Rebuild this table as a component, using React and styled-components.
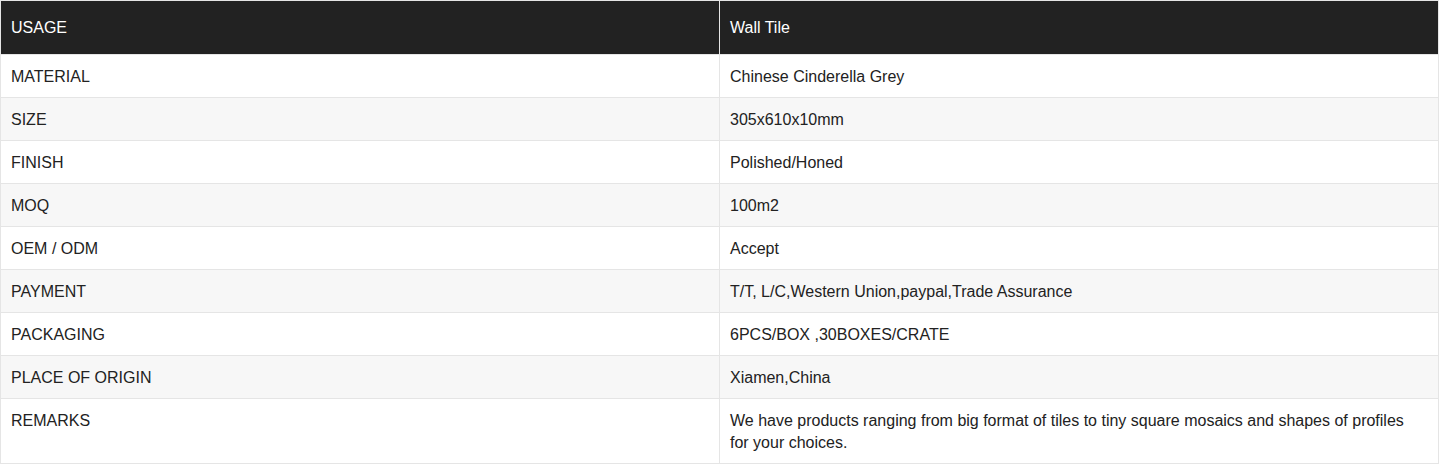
import React from 'react'
import styled, { createGlobalStyle } from 'styled-components';

const GlobalStyle = createGlobalStyle`
  body {
    margin: 0;
    background: #fff;
    font-family: "Liberation Sans", Arial, sans-serif;
  }
`;

const Table = styled.table`
  width: 1439px;
  border-collapse: collapse;
  table-layout: fixed;
  font-size: 16px;
  line-height: 22px;
  color: #222;
`;

const HeadCell = styled.th`
  background: #222;
  color: #fff;
  font-weight: normal;
  text-align: left;
  padding: 16px 10px 15px;
  border: 1px solid #e5e5e5;
`;

const Row = styled.tr`
  background: ${props => props.$striped ? '#f7f7f7' : '#fff'};
`;

const Cell = styled.td`
  padding: 11px 20px 9px 10px;
  border: 1px solid #e5e5e5;
  vertical-align: top;
`;

const specs = [
  ['MATERIAL', 'Chinese Cinderella Grey'],
  ['SIZE', '305x610x10mm'],
  ['FINISH', 'Polished/Honed'],
  ['MOQ', '100m2'],
  ['OEM / ODM', 'Accept'],
  ['PAYMENT', 'T/T, L/C,Western Union,paypal,Trade Assurance'],
  ['PACKAGING', '6PCS/BOX ,30BOXES/CRATE'],
  ['PLACE OF ORIGIN', 'Xiamen,China'],
  ['REMARKS', 'We have products ranging from big format of tiles to tiny square mosaics and shapes of profiles for your choices.'],
];

const App = () => {
  return (
    <>
      <GlobalStyle />
      <Table>
        <thead>
          <tr>
            <HeadCell>USAGE</HeadCell>
            <HeadCell>Wall Tile</HeadCell>
          </tr>
        </thead>
        <tbody>
          {specs.map(([label, value], i) => (
            <Row key={label} $striped={i % 2 === 1}>
              <Cell>{label}</Cell>
              <Cell>{value}</Cell>
            </Row>
          ))}
        </tbody>
      </Table>
    </>
  )
};

export default App
